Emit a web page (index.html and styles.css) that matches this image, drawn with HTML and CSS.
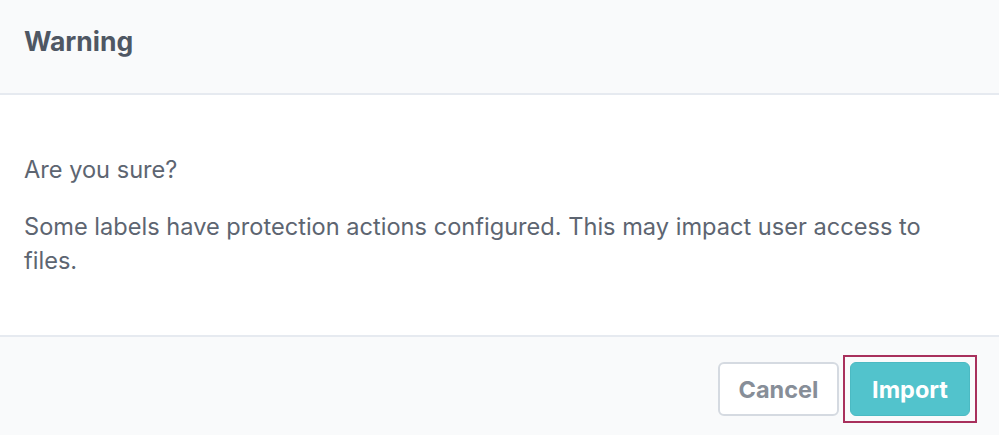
FILE: index.html
```html
<!DOCTYPE html>
<html lang="en">
<head>
<meta charset="utf-8">
<title>Warning</title>
<link rel="stylesheet" href="styles.css">
</head>
<body>
<div class="modal">
  <header class="modal-header">
    <h2 class="modal-title">Warning</h2>
  </header>
  <section class="modal-body">
    <p class="msg">Are you sure?</p>
    <p class="msg">Some labels have protection actions configured. This may impact user access to files.</p>
  </section>
  <footer class="modal-footer">
    <button class="btn btn-secondary">Cancel</button>
    <span class="focus-ring"><button class="btn btn-primary">Import</button></span>
  </footer>
</div>
</body>
</html>
```

FILE: styles.css
```css
* { box-sizing: border-box; }
html, body { margin: 0; padding: 0; }
body {
  width: 999px;
  height: 435px;
  overflow: hidden;
  background: #ffffff;
  font-family: Inter, "Noto Sans", sans-serif;
  color: #5a6270;
}
.modal {
  display: flex;
  flex-direction: column;
  height: 435px;
}
.modal-header {
  height: 95px;
  background: #f9fafb;
  border-bottom: 2px solid #e6eaf0;
  padding: 24px 24px 0;
}
.modal-title {
  margin: 0;
  font-size: 26.5px;
  line-height: 34px;
  font-weight: 700;
  color: #4f5763;
}
.modal-body {
  height: 240px;
  padding: 58px 60px 0 24px;
}
.msg {
  margin: 0 0 23px;
  font-size: 23.6px;
  line-height: 34px;
  color: #5d6571;
}
.modal-footer {
  flex: 1;
  background: #f9fafb;
  border-top: 2px solid #e6eaf0;
  display: flex;
  justify-content: flex-end;
  align-items: flex-start;
  padding: 18px 22px 0 0;
  gap: 4px;
}
.btn {
  font-family: Inter, "Noto Sans", sans-serif;
  font-size: 23.5px;
  font-weight: 700;
  height: 54px;
  border-radius: 6px;
  padding: 0;
  cursor: pointer;
}
.btn-secondary {
  margin-top: 7px;
  width: 121px;
  background: #ffffff;
  border: 2px solid #d5dae1;
  color: #878e98;
}
.focus-ring {
  display: block;
  padding: 5px;
  border: 2px solid #a8305c;
}
.btn-primary {
  display: block;
  width: 120px;
  background: #52c3cc;
  border: 1px solid #4bbac3;
  color: #ffffff;
}
```
